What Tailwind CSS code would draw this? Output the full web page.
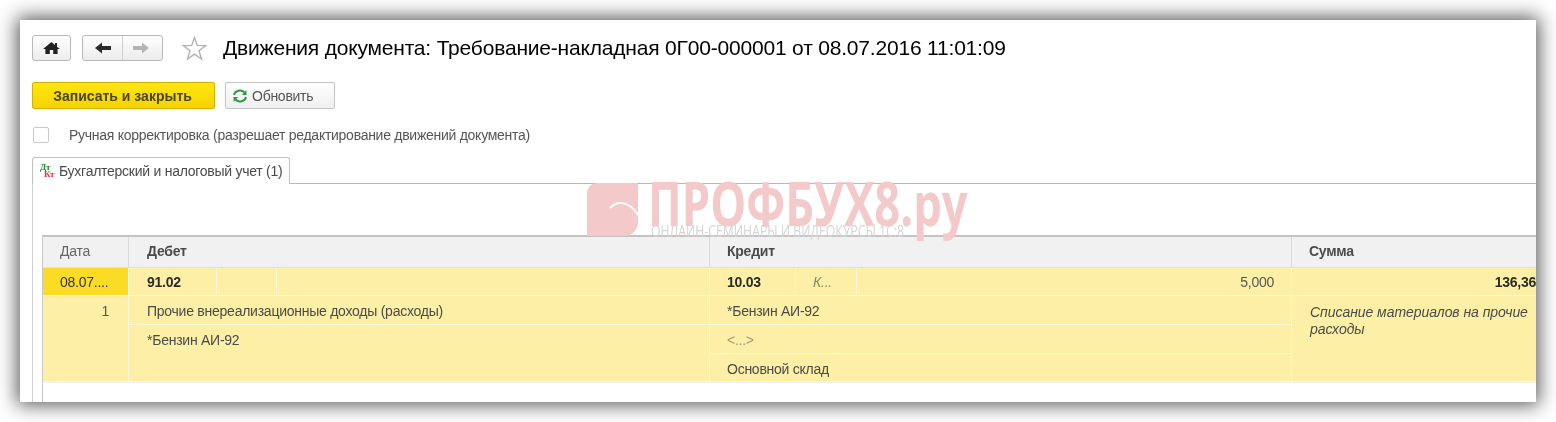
<!DOCTYPE html>
<html lang="ru">
<head>
<meta charset="UTF-8" />
<title>Движения документа</title>
<script src="https://cdn.jsdelivr.net/npm/@tailwindcss/browser@4"></script>
</head>
<body class="bg-white font-['Liberation_Sans',Arial,sans-serif] overflow-hidden">
<div class="w-[1556px] h-[422px] p-5">
  <!-- Window -->
  <div class="relative w-[1516px] h-[382px] bg-white overflow-hidden blur-[0.35px]">
    <div class="pl-3 pt-[15px]">
      <!-- Nav + title -->
      <div class="flex items-center h-[26px]">
        <button class="w-[39px] h-[26px] flex items-center justify-center rounded-[3px] border border-[#b8b8b8] bg-gradient-to-b from-white to-[#ececec]">
          <svg width="17" height="12" viewBox="0 0 17 12"><path d="M8.5 0 L12 3 L12 1 L14 1 L14 4.7 L17 7 L14.6 7 L14.6 12 L10.2 12 L10.2 8 L6.8 8 L6.8 12 L2.4 12 L2.4 7 L0 7 Z" fill="#222"/></svg>
        </button>
        <div class="ml-[11px] w-[81px] h-[26px] flex rounded-[3px] border border-[#b8b8b8] bg-gradient-to-b from-white to-[#ececec]">
          <div class="w-[40px] flex items-center justify-center border-r border-[#d0d0d0]">
            <svg width="16" height="12" viewBox="0 0 16 12"><path d="M0 6 L7 .5 L7 4 L16 4 L16 8 L7 8 L7 11.5 Z" fill="#2b2b2b"/></svg>
          </div>
          <div class="flex-1 flex items-center justify-center pr-1">
            <svg width="16" height="12" viewBox="0 0 16 12"><path d="M16 6 L9 .5 L9 4 L0 4 L0 8 L9 8 L9 11.5 Z" fill="#b4b4b4"/></svg>
          </div>
        </div>
        <svg class="ml-[19px]" width="25" height="25" viewBox="0 0 25 25"><path d="M12.5 1.5 L15.3 9.4 L23.8 9.6 L17 14.7 L19.5 23 L12.5 18.1 L5.5 23 L8 14.7 L1.2 9.6 L9.7 9.4 Z" fill="none" stroke="#b2b2b2" stroke-width="1.4"/></svg>
        <h1 class="ml-[16px] text-[21px] tracking-[-0.19px] leading-[26px] text-black whitespace-nowrap">Движения документа: Требование-накладная 0Г00-000001 от 08.07.2016 11:01:09</h1>
      </div>
      <!-- Command bar -->
      <div class="flex mt-[21px] h-[27px]">
        <button class="w-[183px] pt-px pr-[2px] rounded-[2px] border border-[#d3b300] bg-gradient-to-b from-[#ffe610] to-[#f5d300] text-[14px] font-bold text-[#4a4520]">Записать и закрыть</button>
        <button class="ml-[10px] w-[110px] flex items-center rounded-[2px] border border-[#c4c4c4] bg-gradient-to-b from-white to-[#efefef] text-[14px] tracking-[-0.26px] text-[#555] pl-[6px]">
          <svg width="16" height="14" viewBox="0 0 16 14" fill="none" stroke="#2e9c3e" stroke-width="2"><path d="M2 6 A6 5.5 0 0 1 12.5 3.5"/><path d="M14 8 A6 5.5 0 0 1 3.5 10.5"/><path d="M14.5 1 V6 H10" fill="#2e9c3e" stroke="none"/><path d="M1.5 13 V8 H6" fill="#2e9c3e" stroke="none"/></svg>
          <span class="ml-[4px] pt-px">Обновить</span>
        </button>
      </div>
      <!-- Checkbox -->
      <div class="flex items-center mt-[18px] h-[16px]">
        <span class="ml-px w-[16px] h-[16px] rounded-[2px] border border-[#c8c8c8] bg-white"></span>
        <span class="ml-[20px] text-[14px] tracking-[-0.27px] text-[#555] whitespace-nowrap">Ручная корректировка (разрешает редактирование движений документа)</span>
      </div>
      <!-- Tab -->
      <div class="flex mt-[14px] h-[27px] border-b border-[#b8b8b8]">
        <div class="w-[258px] h-[27px] flex items-center rounded-t-[3px] border border-b-0 border-[#c0c0c0] bg-white pl-[7px] text-[14px] tracking-[-0.26px] text-[#4a4a4a] whitespace-nowrap">
          <span class="w-[14px] flex flex-col font-['Liberation_Serif',serif] font-bold text-[9px] leading-[7px]">
            <span class="text-[#1d8a2a]">Дт</span>
            <span class="text-[#f03030] ml-[4px]">Кт</span>
          </span>
          <span class="ml-[5px]">Бухгалтерский и налоговый учет (1)</span>
        </div>
      </div>
      <!-- Tab body -->
      <div class="border-l border-[#d0d0d0] pl-[9px] pt-[51px] h-[219px]">
        <div class="border-l border-[#c8c8c8] h-full">
          <div class="border-t-2 border-[#c4c4c4] grid grid-cols-[86px_581px_582px_1fr] text-[14px] tracking-[-0.25px] text-[#4a4a4a]">
            <!-- Header -->
            <div class="h-[30px] pb-px bg-[#f1f1f1] border-r border-[#d8d8d8] flex items-center pl-[17px] text-[#666]">Дата</div>
            <div class="h-[30px] pb-px bg-[#f1f1f1] border-r border-[#d8d8d8] flex items-center pl-[18px] font-bold">Дебет</div>
            <div class="h-[30px] pb-px bg-[#f1f1f1] border-r border-[#d8d8d8] flex items-center pl-[17px] font-bold">Кредит</div>
            <div class="h-[30px] pb-px bg-[#f1f1f1] flex items-center pl-[17px] font-bold">Сумма</div>
          </div>
          <div class="border-t border-[#e0e0e0] grid grid-cols-[86px_581px_582px_1fr] grid-rows-[28px_29px_29px_27px] bg-[#fdf0a6] text-[14px] tracking-[-0.25px] text-[#4a4a4a]">
            <!-- First row -->
            <div class="bg-[#fadc26] border-r border-b border-[#fdf8d8] flex items-center pl-[17px] pt-px text-[#333]">08.07....</div>
            <div class="grid grid-cols-[88px_60px_1fr] border-r border-b border-[#fff9d8]">
              <div class="border-r border-[#fff9d8] flex items-center pl-[18px] pt-px font-bold text-[#2b2b2b]">91.02</div>
              <div class="border-r border-[#fff9d8]"></div>
              <div></div>
            </div>
            <div class="grid grid-cols-[86px_61px_1fr] border-r border-b border-[#fff9d8]">
              <div class="border-r border-[#fff9d8] flex items-center pl-[17px] pt-px font-bold text-[#2b2b2b]">10.03</div>
              <div class="border-r border-[#fff9d8] flex items-center pl-[17px] pt-px italic text-[#8a8566]">К...</div>
              <div class="flex items-center justify-end pr-[17px] pt-px text-[#555]">5,000</div>
            </div>
            <div class="border-b border-[#fff9d8] flex items-center justify-end pt-px font-bold text-[#2b2b2b] whitespace-nowrap overflow-hidden">136,36</div>
            <!-- Detail rows -->
            <div class="row-span-3 border-r border-[#fff9d8] flex justify-end pr-[19px] pt-[5px] text-[#555]">1</div>
            <div class="border-r border-b border-[#fff9d8] flex items-center pl-[18px] pt-[3px]">Прочие внереализационные доходы (расходы)</div>
            <div class="border-r border-b border-[#fff9d8] flex items-center pl-[17px] pt-[3px]">*Бензин АИ-92</div>
            <div class="row-span-3 pl-[18px] pt-[8px] italic tracking-[-0.05px] leading-[17px]">Списание материалов на прочие расходы</div>
            <div class="row-span-2 border-r border-[#fff9d8] pl-[18px] pt-[5px]">*Бензин АИ-92</div>
            <div class="border-r border-b border-[#fff9d8] flex items-center pl-[17px] pt-[3px] text-[#a09a78]">&lt;...&gt;</div>
            <div class="border-r border-[#fff9d8] flex items-center pl-[17px] pt-[4px]">Основной склад</div>
          </div>
          <div class="h-[2px] bg-[#f2f2f2]"></div>
        </div>
      </div>
    </div>
    <!-- Watermark -->
    <div class="absolute left-[567px] top-[163px] w-[51px] h-[53px] bg-[#f3c9c9] rounded-tl-[10px] rounded-br-[14px] overflow-hidden">
      <svg width="51" height="53" viewBox="0 0 51 53" fill="none" stroke="#fff" stroke-width="2"><path d="M23 25 C32 16 44 20 51 32"/></svg>
    </div>
    <div class="absolute left-[628px] top-[152px] h-[62px] origin-left scale-x-[0.755] font-['Open_Sans',sans-serif] font-bold text-[60px] leading-[62px] text-[#f3c9c9] whitespace-nowrap">ПРОФБУХ8.ру</div>
    <div class="absolute left-[631px] top-[201px] origin-left scale-x-[0.766] font-['Open_Sans',sans-serif] text-[16px] leading-[20px] text-[#d4d4d4] whitespace-nowrap">ОНЛАЙН-СЕМИНАРЫ И ВИДЕОКУРСЫ 1С:8</div>
  </div>
</div>
<!-- Window shadow -->
<div class="fixed left-5 top-5 w-[1516px] h-[382px] shadow-[0_0_18px_3px_rgba(0,0,0,0.65)] pointer-events-none"></div>
</body>
</html>
